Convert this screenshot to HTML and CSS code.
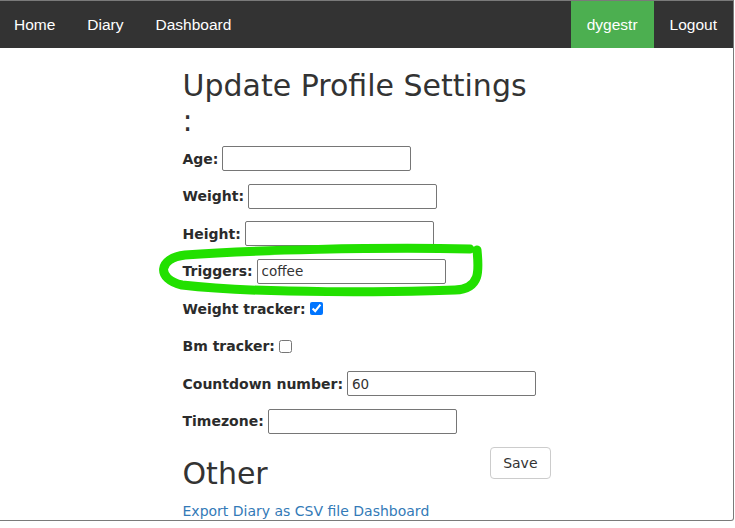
FILE: index.html
```html
<!DOCTYPE html>
<html>
<head>
<meta charset="utf-8">
<link rel="stylesheet" href="styles.css">
</head>
<body>
<div class="frame">
  <nav class="navbar">
    <a class="nav-link" href="#">Home</a>
    <a class="nav-link" href="#">Diary</a>
    <a class="nav-link" href="#">Dashboard</a>
    <span class="spacer"></span>
    <a class="nav-link active" href="#">dygestr</a>
    <a class="nav-link" href="#">Logout</a>
  </nav>
  <main class="content">
    <h1 class="title">Update Profile Settings :</h1>
    <form class="form">
      <div class="row"><label>Age:</label><input class="text" type="text"></div>
      <div class="row"><label>Weight:</label><input class="text" type="text"></div>
      <div class="row"><label>Height:</label><input class="text" type="text"></div>
      <div class="row"><label>Triggers:</label><input class="text" type="text" value="coffee"></div>
      <div class="row"><label>Weight tracker:</label><input class="check" type="checkbox" checked></div>
      <div class="row"><label>Bm tracker:</label><input class="check" type="checkbox"></div>
      <div class="row"><label>Countdown number:</label><input class="text" type="text" value="60"></div>
      <div class="row"><label>Timezone:</label><input class="text" type="text"></div>
    </form>
    <button class="save" type="button">Save</button>
    <h1 class="title other">Other</h1>
    <p class="links"><a href="#">Export Diary as CSV file</a> <a href="#">Dashboard</a></p>
  </main>
  <svg class="scribble" width="735" height="528" viewBox="0 0 735 528">
    <path d="M 470 249 C 380 247, 250 250, 185 255 C 158 258, 156 279, 182 285 C 260 294, 400 292, 455 290 C 481 289, 479 270, 477 250" fill="none" stroke="#22e000" stroke-width="9" stroke-linecap="round"/>
  </svg>
</div>
</body>
</html>
```

FILE: styles.css
```css
html, body {
  margin: 0;
  padding: 0;
  background: #fff;
}

.frame {
  position: relative;
  box-sizing: border-box;
  width: 734px;
  height: 521px;
  border-top: 1px solid #7a7a7a;
  border-right: 1px solid #7a7a7a;
  border-bottom: 1px solid #7a7a7a;
  border-bottom-right-radius: 3px;
  overflow: hidden;
  font-family: "DejaVu Sans", Verdana, sans-serif;
  color: #333;
}

.navbar {
  display: flex;
  height: 47px;
  background: #333;
  font-family: "Liberation Sans", Arial, sans-serif;
  font-size: 15.5px;
}

.nav-link {
  display: flex;
  align-items: center;
  padding: 0 16px;
  color: #fff;
  text-decoration: none;
}

.nav-link:first-child {
  padding-left: 14px;
}

.nav-link.active {
  background: #4caf50;
}

.spacer {
  flex: 1;
}

.content {
  width: 368px;
  margin: 0 auto;
}

.title {
  font-size: 30px;
  font-weight: normal;
  line-height: 35px;
  margin: 20px 10px 8px 0;
  color: #333;
}

.form {
  display: flex;
  flex-direction: column;
  gap: 12.5px;
}

.row {
  display: flex;
  align-items: center;
  height: 25px;
  font-size: 14px;
  color: #2b2b2b;
}

.row label {
  font-weight: bold;
  margin-right: 4px;
}

.text {
  box-sizing: border-box;
  width: 189px;
  height: 25px;
  margin: 0;
  padding: 0 4px;
  border: 1px solid #767676;
  border-radius: 2px;
  font-family: "DejaVu Sans", Verdana, sans-serif;
  font-size: 13.5px;
  color: #333;
  background: #fff;
}

.check {
  width: 13px;
  height: 13px;
  margin: 0;
  accent-color: #0075ff;
}

.save {
  float: right;
  box-sizing: border-box;
  height: 32px;
  margin-top: 13px;
  padding: 0 12px;
  border: 1px solid #ccc;
  border-radius: 4px;
  background: #fff;
  font-family: "DejaVu Sans", Verdana, sans-serif;
  font-size: 14px;
  color: #333;
}

.title.other {
  margin: 22px 0 12px 0;
}

.links {
  margin: 0;
  font-size: 14px;
}

.links a {
  color: #337ab7;
  text-decoration: none;
}

.scribble {
  position: absolute;
  left: 0;
  top: -1px;
  pointer-events: none;
}
```
